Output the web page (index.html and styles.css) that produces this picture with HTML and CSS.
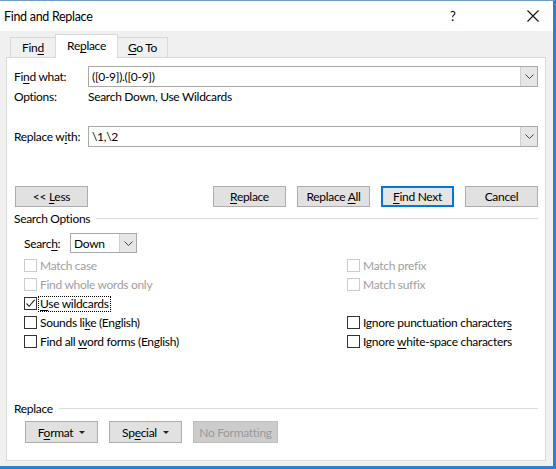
FILE: index.html
```html
<!DOCTYPE html>
<html>
<head>
<meta charset="utf-8">
<link rel="stylesheet" href="styles.css">
</head>
<body>
<div class="window">
  <div class="titlebar">
    <span class="title">Find and Replace</span>
    <span class="help">?</span>
    <span class="close"><svg width="12" height="12" viewBox="0 0 12 12"><path d="M0.5 0.5 L11.5 11.5 M11.5 0.5 L0.5 11.5" stroke="#111" stroke-width="1.1" fill="none"/></svg></span>
  </div>
  <div class="tabs">
    <div class="tab"><span>Fin<u>d</u></span></div>
    <div class="tab active"><span>Re<u>p</u>lace</span></div>
    <div class="tab"><span><u>G</u>o To</span></div>
  </div>
  <div class="panel">
    <div class="row find-row">
      <span class="label">Fi<u>n</u>d what:</span>
      <div class="combo">
        <span class="combo-text">([0-9]).([0-9])</span>
        <span class="drop"><svg width="9" height="5" viewBox="0 0 9 5"><path d="M0.5 0.5 L4.5 4.5 L8.5 0.5" stroke="#444" fill="none"/></svg></span>
      </div>
    </div>
    <div class="row options-row">
      <span class="label">Options:</span>
      <span class="opt-text">Search Down, Use Wildcards</span>
    </div>
    <div class="row replace-row">
      <span class="label">Replace w<u>i</u>th:</span>
      <div class="combo">
        <span class="combo-text">\1,\2</span>
        <span class="drop"><svg width="9" height="5" viewBox="0 0 9 5"><path d="M0.5 0.5 L4.5 4.5 L8.5 0.5" stroke="#444" fill="none"/></svg></span>
      </div>
    </div>
    <div class="row buttons-row">
      <button class="btn less"><span>&lt;&lt; <u>L</u>ess</span></button>
      <div class="btn-group">
        <button class="btn"><span><u>R</u>eplace</span></button>
        <button class="btn"><span>Replace <u>A</u>ll</span></button>
        <button class="btn default"><span><u>F</u>ind Next</span></button>
        <button class="btn"><span>Cancel</span></button>
      </div>
    </div>
    <div class="group-head search-head"><span>Search Options</span><span class="rule"></span></div>
    <div class="row search-row">
      <span class="search-label">Searc<u>h</u>:</span>
      <div class="select">
        <span class="select-text">Down</span>
        <span class="drop"><svg width="9" height="5" viewBox="0 0 9 5"><path d="M0.5 0.5 L4.5 4.5 L8.5 0.5" stroke="#444" fill="none"/></svg></span>
      </div>
    </div>
    <div class="checks">
      <div class="chk disabled"><span class="box"></span><span>Match case</span></div>
      <div class="chk disabled"><span class="box"></span><span>Match prefix</span></div>
      <div class="chk disabled"><span class="box"></span><span>Find whole words only</span></div>
      <div class="chk disabled"><span class="box"></span><span>Match suffix</span></div>
      <div class="chk"><span class="box"><svg width="11" height="11" viewBox="0 0 11 11"><path d="M1.5 5.5 L4.2 8.3 L9.6 1.8" stroke="#222" stroke-width="1.1" fill="none"/></svg></span><span class="focus"><u>U</u>se wildcards</span></div>
      <div class="chk empty"></div>
      <div class="chk"><span class="box"></span><span>Sounds li<u>k</u>e (English)</span></div>
      <div class="chk"><span class="box"></span><span>Ignore punctuation character<u>s</u></span></div>
      <div class="chk"><span class="box"></span><span>Find all <u>w</u>ord forms (English)</span></div>
      <div class="chk"><span class="box"></span><span>Ignore <u>w</u>hite-space characters</span></div>
    </div>
    <div class="group-head replace-head"><span>Replace</span><span class="rule"></span></div>
    <div class="row bottom-row">
      <button class="btn"><span>F<u>o</u>rmat</span><span class="caret"></span></button>
      <button class="btn"><span>Sp<u>e</u>cial</span><span class="caret"></span></button>
      <button class="btn nofmt" disabled><span>No Formatting</span></button>
    </div>
  </div>
</div>
</body>
</html>
```

FILE: styles.css
```css
* { box-sizing: border-box; }
html, body { margin: 0; padding: 0; background: #ffffff; }
body {
  width: 556px;
  height: 469px;
  overflow: hidden;
  font-family: "Lato", "Noto Sans", sans-serif;
  font-size: 12px;
  letter-spacing: -0.3px;
  color: #000;
  white-space: nowrap;
}
u { text-decoration: underline; text-underline-offset: 2px; text-decoration-thickness: 1px; }
.window {
  width: 556px;
  height: 469px;
  background: #f0f0f0;
  border-top: 1px solid #6f9cc9;
  border-right: 3px solid #2f7fcf;
  border-bottom: 3px solid #2f7fcf;
}
.titlebar {
  height: 30px;
  background: #ffffff;
  display: flex;
  align-items: center;
  padding-left: 4px;
}
.title { flex: 1; font-size: 12.5px; }
.help { width: 20px; margin-right: 48px; font-size: 13px; }
.close { width: 30px; display: flex; justify-content: center; margin-right: 5px; }
.tabs {
  display: flex;
  align-items: flex-end;
  height: 27px;
  padding-left: 10px;
  position: relative;
  z-index: 1;
}
.tab {
  height: 20px;
  margin-bottom: 1px;
  border: 1px solid #d9d9d9;
  border-bottom: none;
  background: #f0f0f0;
  display: flex;
  align-items: center;
  justify-content: center;
}
.tab:nth-child(1) { width: 45px; border-right: none; }
.tab:nth-child(3) { width: 50px; border-left: none; }
.tab.active {
  width: 63px;
  height: 24px;
  margin-bottom: 0;
  background: #ffffff;
  padding-bottom: 2px;
}
.panel {
  margin-left: 6px;
  width: 540px;
  height: 404px;
  background: #ffffff;
  border: 1px solid #d9d9d9;
  padding-left: 7px;
  margin-top: -1px;
}
.row { display: flex; align-items: center; }
.label { width: 74px; flex: none; }
.combo {
  width: 450px;
  height: 21px;
  border: 1px solid #a9a9a9;
  display: flex;
  align-items: center;
}
.combo-text { flex: 1; padding-left: 3px; }
.drop {
  width: 17px;
  height: 19px;
  background: #e6e6e6;
  border-left: 1px solid #cfcfcf;
  display: flex;
  align-items: center;
  justify-content: center;
}
.find-row { margin-top: 8px; }
.options-row { margin-top: 1px; height: 16px; }
.replace-row { margin-top: 22px; }
.buttons-row { margin-top: 39px; justify-content: space-between; width: 524px; }
.btn {
  font-family: inherit;
  font-size: 12px;
  letter-spacing: -0.3px;
  color: #000;
  width: 73px;
  height: 21px;
  background: #e1e1e1;
  border: 1px solid #adadad;
  padding: 0;
  display: flex;
  align-items: center;
  justify-content: center;
  white-space: nowrap;
}
.less { margin-left: 1px; }
.btn-group { display: flex; gap: 11px; }
.btn.default { border: 2px solid #0078d7; background: #e5e5e5; }
.group-head {
  display: flex;
  align-items: center;
  height: 16px;
  width: 524px;
  color: #000;
}
.group-head .rule { flex: 1; height: 1px; background: #dcdcdc; margin-left: 6px; margin-top: 1px; }
.search-head { margin-top: 3px; }
.search-row { margin-top: 7px; padding-left: 10px; }
.search-label { width: 46px; }
.select {
  width: 67px;
  height: 20px;
  border: 1px solid #a9a9a9;
  display: flex;
  align-items: center;
}
.select-text { flex: 1; padding-left: 3px; }
.select .drop { height: 18px; }
.checks {
  margin-top: 3px;
  margin-left: 10px;
  display: grid;
  grid-template-columns: 323px 180px;
  grid-auto-rows: 19px;
}
.chk { display: flex; align-items: center; }
.box {
  width: 13px;
  height: 13px;
  border: 1px solid #333;
  background: #fff;
  margin-right: 3px;
  flex: none;
  display: flex;
  align-items: center;
  justify-content: center;
}
.chk.disabled { color: #a0a0a0; }
.chk.disabled .box { border-color: #cccccc; }
.focus { outline: 1px dotted #000; outline-offset: 0; padding: 0 1px; margin-left: -1px; line-height: 14px; }
.replace-head { margin-top: 49px; }
.bottom-row { margin-top: 5px; padding-left: 11px; gap: 11px; }
.bottom-row .btn { height: 22px; gap: 6px; }
.caret {
  width: 0; height: 0;
  border-left: 3px solid transparent;
  border-right: 3px solid transparent;
  border-top: 3px solid #222;
  margin-top: 1px;
}
.btn.nofmt {
  width: 85px;
  background: #cccccc;
  border-color: #bfbfbf;
  color: #9a9a9a;
}
```
